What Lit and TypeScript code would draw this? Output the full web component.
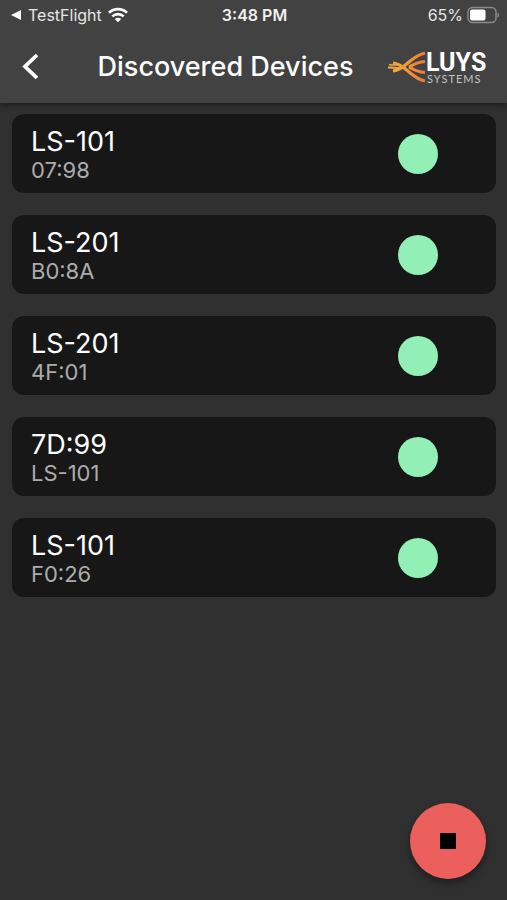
import { LitElement, html, css } from "lit";
import { customElement, property, state } from "lit/decorators.js";

interface Device {
  title: string;
  detail: string;
}

@customElement("status-bar")
class StatusBar extends LitElement {
  static styles = css`
    :host {
      display: grid;
      grid-template-columns: 1fr auto 1fr;
      align-items: center;
      height: 30px;
      padding: 0 8px 0 10px;
      font-size: 16px;
      line-height: 20px;
      color: #e6e6e6;
    }
    .side {
      display: flex;
      align-items: center;
      gap: 6px;
    }
    .end {
      justify-content: flex-end;
      gap: 4px;
    }
    .back {
      display: flex;
      align-items: center;
      gap: 6px;
      color: inherit;
      text-decoration: none;
    }
    .time {
      font-weight: 600;
      color: #f0f0f0;
    }
    svg {
      display: block;
      flex: none;
    }
  `;

  render() {
    return html`
      <div class="side">
        <a class="back" href="#">
          <svg width="12" height="12" viewBox="0 0 12 12" aria-hidden="true">
            <path d="M1 6 11 1v10z" fill="#fff" />
          </svg>
          TestFlight
        </a>
        <svg width="20" height="16" viewBox="0 0 20 16" role="img" aria-label="Wi-Fi">
          <g fill="none" stroke="#fff" stroke-width="2.7">
            <path d="M1 5.8a12.8 12.8 0 0 1 18 0" />
            <path d="M4.3 9.4a8.1 8.1 0 0 1 11.4 0" />
          </g>
          <path d="M6.8 12a4.6 4.6 0 0 1 6.4 0L10 15.2z" fill="#fff" />
        </svg>
      </div>
      <time class="time">3:48 PM</time>
      <div class="side end">
        <span>65%</span>
        <svg width="32" height="18" viewBox="0 0 32 18" role="img" aria-label="Battery">
          <rect x="1" y="1.5" width="28" height="15" rx="4.5" fill="none" stroke="#8b8b8b" stroke-width="1.4" />
          <path d="M30.5 6.5c2 .6 2 4.4 0 5z" fill="#8b8b8b" />
          <rect x="3" y="3.5" width="15.5" height="11" rx="2" fill="#fff" />
        </svg>
      </div>
    `;
  }
}

@customElement("luys-logo")
class LuysLogo extends LitElement {
  static styles = css`
    :host {
      display: block;
    }
    svg {
      display: block;
    }
    .name {
      font: 700 25px Roboto, sans-serif;
      fill: #fff;
    }
    .sub {
      font: 400 11px Lato, sans-serif;
      letter-spacing: 1px;
      fill: #c4c4c4;
    }
  `;

  render() {
    return html`
      <svg width="102" height="40" viewBox="0 0 102 40" role="img" aria-label="Luys Systems">
        <defs>
          <linearGradient id="flame" gradientUnits="userSpaceOnUse" x1="0" y1="0" x2="38" y2="0">
            <stop offset="0" stop-color="#f0b040" />
            <stop offset="0.5" stop-color="#f39a38" />
            <stop offset="1" stop-color="#ee7836" />
          </linearGradient>
        </defs>
        <g fill="none" stroke="url(#flame)">
          <path d="M38 6C29 8 25 13 19 17.500c-4 3-6 5.500-13 6.500" stroke-width="3.200" />
          <path d="M38 14.500C31 15 27 17 22 20" stroke-width="3" />
          <path d="M38 25.500C31 25 27 23 22 20" stroke-width="3" />
          <path d="M38 34C29 32 25 27 19 22.500c-4-3-6-5.500-13-6.500" stroke-width="3.200" />
          <path d="M13 21C9 21.500 6 20 1 20.500" stroke-width="2" />
          <path d="M12 18C9 18 6 18.500 2 17.500" stroke-width="1.500" />
        </g>
        <text class="name" x="39" y="24">LUYS</text>
        <text class="sub" x="40" y="36">SYSTEMS</text>
      </svg>
    `;
  }
}

@customElement("device-card")
class DeviceCard extends LitElement {
  static styles = css`
    :host {
      display: block;
    }
    .card {
      box-sizing: border-box;
      width: 100%;
      display: flex;
      align-items: center;
      justify-content: space-between;
      padding: 12px 58px 11px 19px;
      border: 0;
      border-radius: 12px;
      background: #171717;
      font: inherit;
      text-align: left;
      cursor: pointer;
    }
    .text {
      display: flex;
      flex-direction: column;
      gap: 1px;
    }
    .title {
      font-size: 27px;
      line-height: 31px;
      color: #fff;
    }
    .detail {
      font-size: 22px;
      line-height: 24px;
      color: #acacac;
    }
    .dot {
      flex: none;
      width: 40px;
      height: 40px;
      border-radius: 50%;
      background: #92efb6;
    }
  `;

  @property({ attribute: false }) device!: Device;

  render() {
    return html`
      <button class="card" type="button">
        <span class="text">
          <span class="title">${this.device.title}</span>
          <span class="detail">${this.device.detail}</span>
        </span>
        <span class="dot"></span>
      </button>
    `;
  }
}

@customElement("app-root")
class AppRoot extends LitElement {
  static styles = css`
    :host {
      display: flex;
      flex-direction: column;
      min-height: 100vh;
      background: #303030;
      font-family: Inter, "Liberation Sans", sans-serif;
    }
    header {
      background: #424242;
      box-shadow: 0 2px 6px rgba(0, 0, 0, 0.45);
    }
    .bar {
      display: grid;
      grid-template-columns: auto 1fr auto;
      align-items: center;
      height: 73px;
      padding: 0 18px 0 16px;
      box-sizing: border-box;
    }
    .back {
      display: flex;
      width: 48px;
      padding: 0;
      border: 0;
      background: none;
      cursor: pointer;
    }
    h1 {
      margin: 0;
      font-size: 27px;
      line-height: 32px;
      font-weight: 500;
      color: #fff;
      text-align: center;
      white-space: nowrap;
    }
    ul {
      display: flex;
      flex-direction: column;
      gap: 22px;
      margin: 0;
      padding: 11px 11px 22px 12px;
      list-style: none;
    }
    .stop {
      position: fixed;
      right: 21px;
      bottom: 21px;
      width: 76px;
      height: 76px;
      display: grid;
      place-items: center;
      padding: 0;
      border: 0;
      border-radius: 50%;
      background: #eb5f5c;
      box-shadow: 0 4px 9px rgba(0, 0, 0, 0.4);
      cursor: pointer;
    }
    .square {
      width: 16px;
      height: 16px;
      background: #000;
    }
  `;

  @state() private devices: Device[] = [
    { title: "LS-101", detail: "07:98" },
    { title: "LS-201", detail: "B0:8A" },
    { title: "LS-201", detail: "4F:01" },
    { title: "7D:99", detail: "LS-101" },
    { title: "LS-101", detail: "F0:26" },
  ];

  render() {
    return html`
      <header>
        <status-bar></status-bar>
        <div class="bar">
          <button class="back" type="button" aria-label="Back">
            <svg width="30" height="30" viewBox="0 0 30 30" aria-hidden="true">
              <path d="M21 3 9 14.500l12 11.500" fill="none" stroke="#fff" stroke-width="3.800" />
            </svg>
          </button>
          <h1>Discovered Devices</h1>
          <luys-logo></luys-logo>
        </div>
      </header>
      <main>
        <ul>
          ${this.devices.map((d) => html`<li><device-card .device=${d}></device-card></li>`)}
        </ul>
      </main>
      <button class="stop" type="button" aria-label="Stop scanning">
        <span class="square"></span>
      </button>
    `;
  }
}
